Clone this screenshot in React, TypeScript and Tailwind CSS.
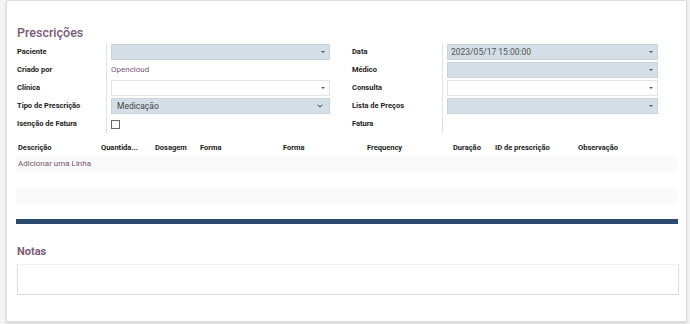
import { ChevronDown } from "lucide-react"

const leftRows = [
  { label: "Paciente", kind: "many2one", filled: true, value: "" },
  { label: "Criado por", kind: "text", value: "Opencloud" },
  { label: "Clínica", kind: "many2one", filled: false, value: "" },
  { label: "Tipo de Prescrição", kind: "select", value: "Medicação" },
  { label: "Isenção de Fatura", kind: "checkbox", value: "" },
]

const rightRows = [
  { label: "Data", kind: "many2one", filled: true, value: "2023/05/17 15:00:00" },
  { label: "Médico", kind: "many2one", filled: true, value: "" },
  { label: "Consulta", kind: "many2one", filled: false, value: "" },
  { label: "Lista de Preços", kind: "many2one", filled: true, value: "" },
  { label: "Fatura", kind: "empty", value: "" },
]

const columns = [
  { name: "Descrição", w: "w-[83px]" },
  { name: "Quantida...", w: "w-[54px]" },
  { name: "Dosagem", w: "w-[45px]" },
  { name: "Forma", w: "w-[83px]" },
  { name: "Forma", w: "w-[84px]" },
  { name: "Frequency", w: "w-[86px]" },
  { name: "Duração", w: "w-[42px]" },
  { name: "ID de prescrição", w: "w-[83px]" },
  { name: "Observação", w: "w-[80px]" },
]

type Row = { label: string; kind: string; filled?: boolean; value: string }

function Field({ row }: { row: Row }) {
  if (row.kind === "text") {
    return <span className="text-[8px] text-[#75566f]">{row.value}</span>
  }
  if (row.kind === "checkbox") {
    return <div className="w-[9px] h-[9px] border border-[#666] bg-white" />
  }
  if (row.kind === "empty") {
    return null
  }
  if (row.kind === "select") {
    return (
      <div className="w-full h-[16px] bg-[#d3dee6] border border-[#c9d4dc] flex items-center justify-between px-[5px]">
        <span className="text-[8.5px] text-[#444]">{row.value}</span>
        <ChevronDown className="w-[8px] h-[8px] text-[#333]" strokeWidth={3} />
      </div>
    )
  }
  return (
    <div
      className={`w-full h-[16px] border flex items-center justify-between pl-[3px] pr-[4px] ${
        row.filled ? "bg-[#d3dee6] border-[#c9d4dc]" : "bg-white border-[#e4e4e4]"
      }`}
    >
      <span className="text-[8.5px] text-[#555]">{row.value}</span>
      <span className="w-0 h-0 border-l-[2px] border-r-[2px] border-t-[2px] border-l-transparent border-r-transparent border-t-[#555]" />
    </div>
  )
}

function Group({ rows, labelW, fieldW }: { rows: Row[]; labelW: string; fieldW: string }) {
  return (
    <div className="flex">
      <div className={`${labelW} flex flex-col`}>
        {rows.map((r) => (
          <div key={r.label} className="h-[18px] flex items-center text-[7.5px] font-bold text-[#222]">
            {r.label}
          </div>
        ))}
      </div>
      <div className={`${fieldW} border-l border-[#e2e2e2] pl-[4px] flex flex-col`}>
        {rows.map((r) => (
          <div key={r.label} className="h-[18px] flex items-center">
            <Field row={r} />
          </div>
        ))}
      </div>
    </div>
  )
}

export default function App() {
  return (
    <div className="w-[690px] h-[324px] bg-[#f4f4f4] pl-[6px] pr-[3px] font-['Roboto',sans-serif] overflow-hidden">
      <div className="h-[322px] bg-white border border-[#dedede] shadow-[0_2px_3px_rgba(0,0,0,0.12)] pl-[10px] pr-[7px]">
        <h1 className="pt-[24px] h-[42px] text-[12.5px] font-medium text-[#7a5a78] leading-[16px]">Prescrições</h1>
        <div className="flex gap-[22px]">
          <Group rows={leftRows} labelW="w-[89px]" fieldW="w-[224px]" />
          <Group rows={rightRows} labelW="w-[90px]" fieldW="w-[216px]" />
        </div>

        <div className="mt-[7px] mr-[1px] -ml-[1px]">
          <div className="h-[16px] flex items-center pl-[2px] text-[7.5px] font-bold text-[#222]">
            {columns.map((c, i) => (
              <div key={i} className={c.w}>
                {c.name}
              </div>
            ))}
          </div>
          <div className="h-[16px] bg-[#fafafa] flex items-center pl-[2px] text-[8px] text-[#75566f]">
            Adicionar uma Linha
          </div>
          <div className="h-[16px] bg-white" />
          <div className="h-[16px] bg-[#fafafa]" />
        </div>

        <div className="mt-[15px] h-[5px] -ml-[1px] mr-[1px] bg-[#2b4a6e]" />

        <h2 className="mt-[20px] h-[20px] text-[11px] font-bold text-[#7a5a78]">Notas</h2>
        <div className="h-[31px] border border-[#dcdcdc] border-t-[#efefef] bg-white" />
      </div>
    </div>
  )
}
